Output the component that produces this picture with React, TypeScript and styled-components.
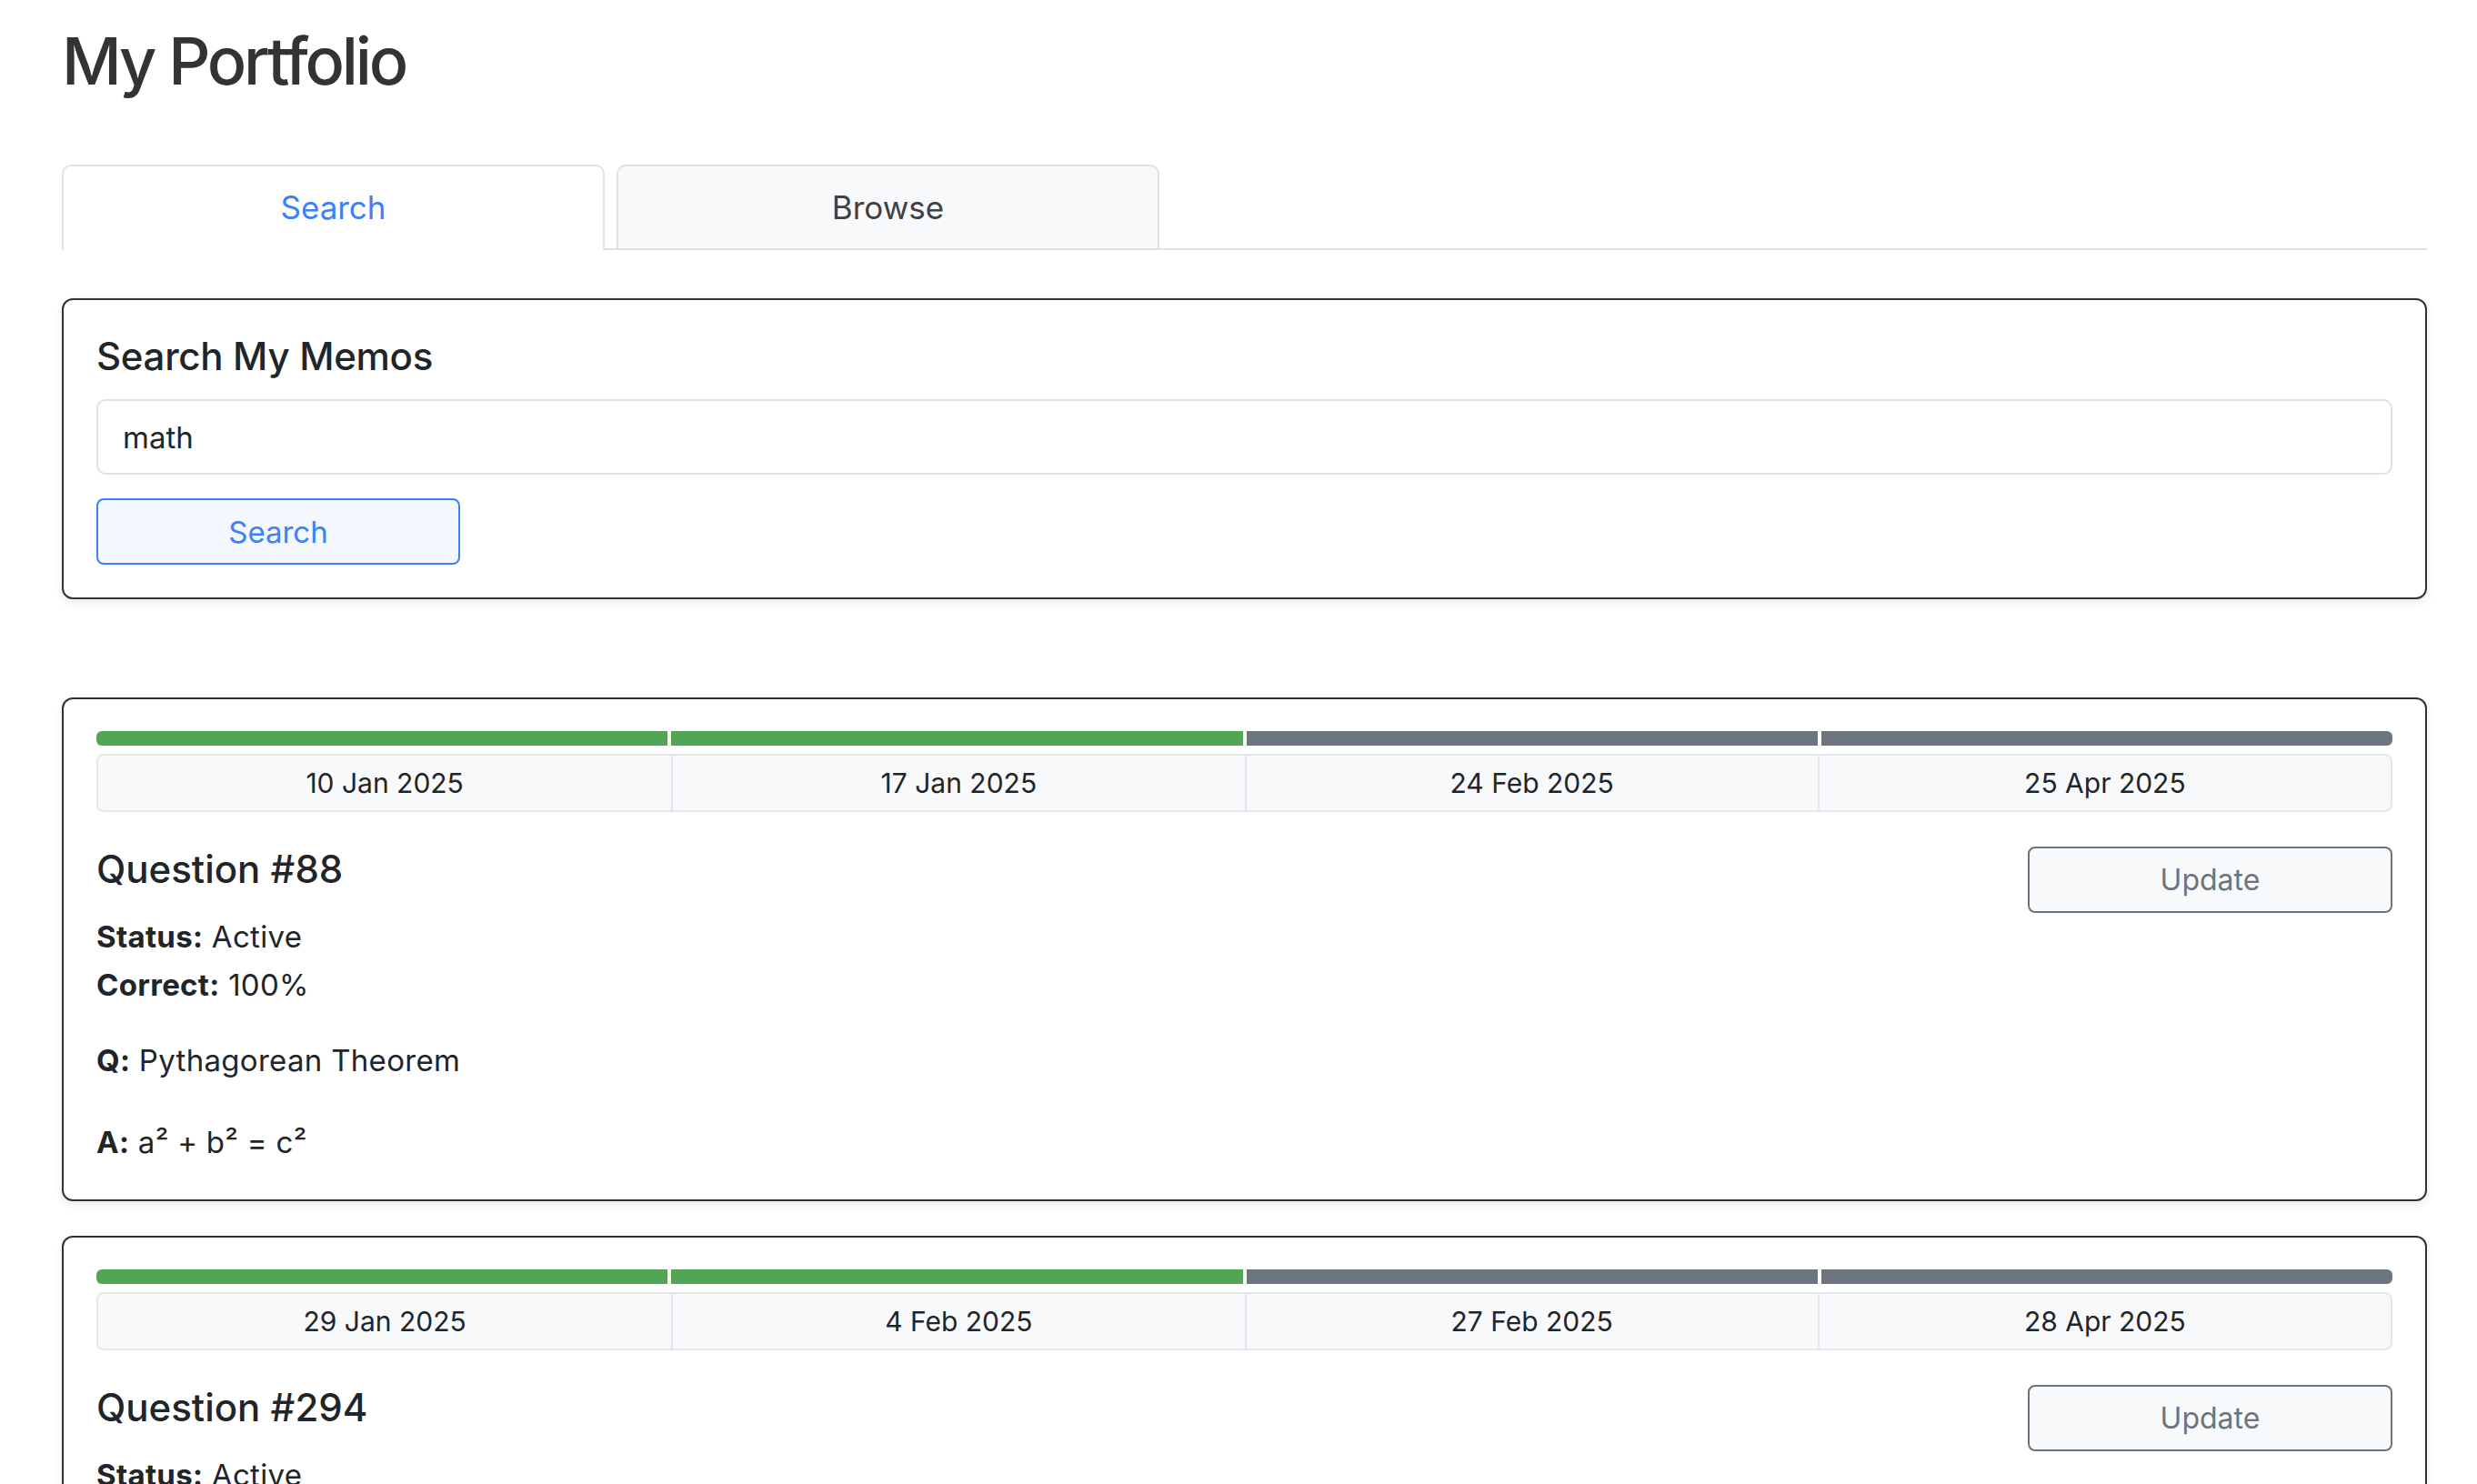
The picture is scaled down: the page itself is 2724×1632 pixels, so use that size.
import React from "react";
import styled, { createGlobalStyle } from "styled-components";

const Global = createGlobalStyle`
  html, body { margin: 0; padding: 0; background: #ffffff; }
  body {
    font-family: Inter, "Noto Sans", "Liberation Sans", sans-serif;
    color: #212529;
    font-size: 32px;
  }
  * { box-sizing: border-box; }
`;

const Page = styled.div`
  padding: 24px 55px 0 68px;
`;

const Title = styled.h1`
  margin: 0;
  font-size: 72px;
  line-height: 86px;
  font-weight: 500;
  color: #333333;
  letter-spacing: -3.2px;
`;

const TabBar = styled.div`
  margin-top: 71px;
  display: flex;
  gap: 13px;
  border-bottom: 2px solid #dee2e6;
`;

const Tab = styled.div<{ $active?: boolean }>`
  width: 597px;
  height: ${(p) => (p.$active ? 94 : 92)}px;
  margin-bottom: ${(p) => (p.$active ? -2 : 0)}px;
  border: 2px solid #dee2e6;
  border-bottom: none;
  border-radius: 10px 10px 0 0;
  background: ${(p) => (p.$active ? "#ffffff" : "#f8f9fa")};
  color: ${(p) => (p.$active ? "#3b82f6" : "#3d4247")};
  font-size: 35px;
  display: flex;
  align-items: center;
  justify-content: center;
  padding-bottom: ${(p) => (p.$active ? 2 : 0)}px;
`;

const Card = styled.section<{ $mt: number }>`
  margin-top: ${(p) => p.$mt}px;
  border: 2px solid #333333;
  border-radius: 12px;
  padding: 35px 36px 36px;
  background: #ffffff;
  box-shadow: 0 4px 10px rgba(0, 0, 0, 0.08);
`;

const SearchTitle = styled.h2`
  margin: 2px 0 22px;
  font-size: 42px;
  line-height: 50px;
  font-weight: 500;
  color: #212529;
  letter-spacing: -0.3px;
`;

const Input = styled.input`
  display: block;
  width: 100%;
  height: 83px;
  border: 2px solid #dee2e6;
  border-radius: 10px;
  padding: 0 27px;
  font-family: inherit;
  font-size: 33px;
  color: #212529;
  background: #ffffff;
  outline: none;
`;

const PrimaryButton = styled.button`
  display: block;
  margin-top: 26px;
  width: 400px;
  height: 73px;
  border: 2px solid #3b82f6;
  border-radius: 8px;
  background: #f4f7fe;
  color: #3b82f6;
  font-family: inherit;
  font-size: 33px;
`;

const Progress = styled.div`
  display: flex;
  gap: 4px;
  height: 16px;
  border-radius: 6px;
  overflow: hidden;
`;

const Segment = styled.div<{ $done: boolean }>`
  flex: 1;
  background: ${(p) => (p.$done ? "#52a552" : "#6c757d")};
`;

const DateRow = styled.div`
  margin-top: 9px;
  height: 64px;
  display: grid;
  grid-template-columns: repeat(4, 1fr);
  border: 2px solid #e3e6ea;
  border-radius: 8px;
  background: #f8f9fa;
`;

const DateCell = styled.div`
  display: flex;
  align-items: center;
  justify-content: center;
  font-size: 30px;
  color: #212529;
  & + & { border-left: 2px solid #e3e6ea; }
`;

const HeaderRow = styled.div`
  margin-top: 38px;
  display: flex;
  justify-content: space-between;
  align-items: flex-start;
`;

const QuestionTitle = styled.h3`
  margin: 0;
  font-size: 42px;
  line-height: 50px;
  font-weight: 500;
  color: #212529;
`;

const UpdateButton = styled.button`
  width: 401px;
  height: 73px;
  border: 2px solid #6c757d;
  border-radius: 8px;
  background: #f8f9fa;
  color: #6c757d;
  font-family: inherit;
  font-size: 32px;
`;

const Field = styled.p<{ $mb: number }>`
  margin: 0 0 ${(p) => p.$mb}px;
  line-height: 53px;
  font-size: 33px;
  letter-spacing: 0.3px;
  & b { font-weight: 700; }
`;

type Memo = {
  id: number;
  dates: string[];
  done: number;
  status: string;
  correct: string;
  q: string;
  a: string;
};

const memos: Memo[] = [
  {
    id: 88,
    dates: ["10 Jan 2025", "17 Jan 2025", "24 Feb 2025", "25 Apr 2025"],
    done: 2,
    status: "Active",
    correct: "100%",
    q: "Pythagorean Theorem",
    a: "a² + b² = c²",
  },
  {
    id: 294,
    dates: ["29 Jan 2025", "4 Feb 2025", "27 Feb 2025", "28 Apr 2025"],
    done: 2,
    status: "Active",
    correct: "100%",
    q: "Quadratic Formula",
    a: "x = (−b ± √(b² − 4ac)) / 2a",
  },
];

function MemoCard({ memo, mt }: { memo: Memo; mt: number }) {
  return (
    <Card $mt={mt}>
      <Progress>
        {memo.dates.map((d, i) => (
          <Segment key={d} $done={i < memo.done} />
        ))}
      </Progress>
      <DateRow>
        {memo.dates.map((d) => (
          <DateCell key={d}>{d}</DateCell>
        ))}
      </DateRow>
      <HeaderRow>
        <QuestionTitle>Question #{memo.id}</QuestionTitle>
        <UpdateButton>Update</UpdateButton>
      </HeaderRow>
      <Field $mb={0}>
        <b>Status:</b> {memo.status}
      </Field>
      <Field $mb={30}>
        <b>Correct:</b> {memo.correct}
      </Field>
      <Field $mb={37}>
        <b>Q:</b> {memo.q}
      </Field>
      <Field $mb={0}>
        <b>A:</b> {memo.a}
      </Field>
    </Card>
  );
}

export default function App() {
  return (
    <>
      <Global />
      <Page>
        <Title>My Portfolio</Title>
        <TabBar>
          <Tab $active>Search</Tab>
          <Tab>Browse</Tab>
        </TabBar>
        <Card $mt={53}>
          <SearchTitle>Search My Memos</SearchTitle>
          <Input defaultValue="math" />
          <PrimaryButton>Search</PrimaryButton>
        </Card>
        {memos.map((m, i) => (
          <MemoCard key={m.id} memo={m} mt={i === 0 ? 108 : 38} />
        ))}
      </Page>
    </>
  );
}
